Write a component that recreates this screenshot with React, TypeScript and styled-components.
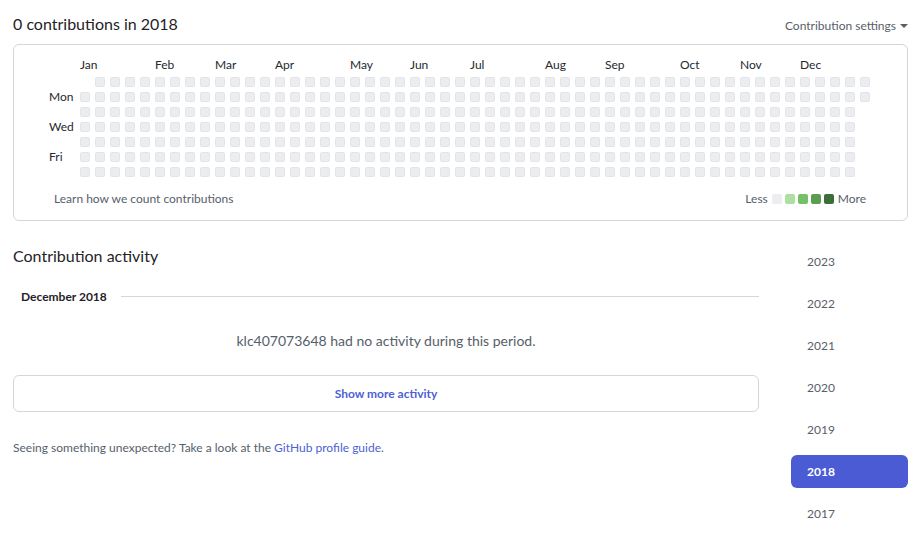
import React from 'react';
import styled, { createGlobalStyle } from 'styled-components';

const GlobalStyle = createGlobalStyle`
  body {
    margin: 0;
    background: #ffffff;
    color: #1f2328;
    font-family: Lato, 'Noto Sans', sans-serif;
  }
`;

const Page = styled.div`
  padding: 7px 16px 0 13px;
  width: 895px;
`;

const TopBar = styled.div`
  display: flex;
  align-items: center;
  justify-content: space-between;
  height: 32px;
  margin-bottom: 5px;
`;

const Heading = styled.h2`
  margin: 0;
  font-size: 16px;
  font-weight: 400;
  color: #1f2328;
`;

const Settings = styled.span`
  display: flex;
  align-items: center;
  gap: 4px;
  margin-top: 5px;
  font-size: 12px;
  color: #57606a;
`;

const Caret = styled.span`
  width: 0;
  height: 0;
  border-left: 4px solid transparent;
  border-right: 4px solid transparent;
  border-top: 4px solid #57606a;
`;

const Card = styled.div`
  border: 1px solid #d0d7de;
  border-radius: 6px;
  padding: 12px 0 10px 35px;
  height: 153px;
`;

const Calendar = styled.div`
  display: flex;
`;

const DayLabels = styled.div`
  display: grid;
  grid-template-rows: repeat(7, 10px);
  row-gap: 5px;
  width: 31px;
  margin-top: 20px;
  font-size: 12px;
  color: #24292f;
`;

const DayLabel = styled.span`
  line-height: 10px;
  height: 10px;
  white-space: nowrap;
`;

const Weeks = styled.div`
  display: flex;
  flex-direction: column;
  gap: 5px;
`;

const MonthRow = styled.div`
  display: grid;
  grid-template-columns: repeat(53, 10px);
  column-gap: 5px;
  height: 15px;
  font-size: 12px;
  color: #24292f;
  line-height: 15px;
`;

const Month = styled.span<{ $col: number }>`
  grid-column: ${(p) => p.$col + 1} / span 4;
  white-space: nowrap;
`;

const Cells = styled.div`
  display: grid;
  grid-template-rows: repeat(7, 10px);
  grid-auto-columns: 10px;
  grid-auto-flow: column;
  gap: 5px;
`;

const Cell = styled.span<{ $empty?: boolean }>`
  width: 10px;
  height: 10px;
  border-radius: 2px;
  background: ${(p) => (p.$empty ? 'transparent' : '#ebedf0')};
  outline: ${(p) => (p.$empty ? 'none' : '1px solid rgba(27, 31, 35, 0.04)')};
  outline-offset: -1px;
`;

const CardFooter = styled.div`
  display: flex;
  justify-content: space-between;
  align-items: center;
  margin-top: 14px;
  padding: 0 40px 0 5px;
  font-size: 12px;
  color: #57606a;
`;

const Legend = styled.div`
  display: flex;
  align-items: center;
  gap: 3px;
`;

const LegendBox = styled.span<{ $color: string }>`
  width: 10px;
  height: 10px;
  border-radius: 2px;
  background: ${(p) => p.$color};
`;

const LegendText = styled.span`
  margin: 0 1px;
`;

const Lower = styled.div`
  display: flex;
  justify-content: space-between;
  margin-top: 23px;
`;

const Activity = styled.div`
  width: 746px;
`;

const ActivityTitle = styled.h2`
  margin: 0;
  font-size: 16px;
  font-weight: 400;
  line-height: 24px;
`;

const PeriodRow = styled.div`
  display: flex;
  align-items: center;
  gap: 14px;
  margin: 18px 0 0 8px;
  height: 20px;
`;

const PeriodLabel = styled.span`
  font-size: 12px;
  font-weight: 700;
  color: #1f2328;
`;

const Rule = styled.span`
  flex: 1;
  height: 1px;
  background: #d0d7de;
`;

const Empty = styled.p`
  margin: 26px 0 0;
  text-align: center;
  font-size: 14px;
  color: #57606a;
`;

const MoreButton = styled.button`
  display: block;
  width: 100%;
  height: 37px;
  margin-top: 26px;
  border: 1px solid #d0d7de;
  border-radius: 6px;
  background: #ffffff;
  font-family: inherit;
  font-size: 12px;
  font-weight: 700;
  color: #4c5fd5;
`;

const Hint = styled.p`
  margin: 28px 0 0;
  font-size: 12px;
  color: #57606a;
`;

const Link = styled.a`
  color: #4c5fd5;
  text-decoration: none;
`;

const Years = styled.ul`
  list-style: none;
  margin: 1px 0 0;
  padding: 0;
  width: 117px;
  display: flex;
  flex-direction: column;
  gap: 9px;
`;

const Year = styled.li<{ $active?: boolean }>`
  height: 33px;
  display: flex;
  align-items: center;
  padding-left: 16px;
  border-radius: 6px;
  font-size: 12px;
  font-weight: ${(p) => (p.$active ? 700 : 400)};
  color: ${(p) => (p.$active ? '#ffffff' : '#57606a')};
  background: ${(p) => (p.$active ? '#4a5bd4' : 'transparent')};
`;

const MONTHS = ['Jan', 'Feb', 'Mar', 'Apr', 'May', 'Jun', 'Jul', 'Aug', 'Sep', 'Oct', 'Nov', 'Dec'];
const DAYS = ['', 'Mon', '', 'Wed', '', 'Fri', ''];
const LEVELS = ['#ebedf0', '#acdfa2', '#74c067', '#5b9e51', '#3e6e37'];
const YEARS = [2023, 2022, 2021, 2020, 2019, 2018, 2017];

// the first week of 2018 starts on Sunday Dec 31 2017
const start = new Date(2017, 11, 31);
const dayIndex = (d: Date) => Math.round((d.getTime() - start.getTime()) / 86400000);

const monthCols = MONTHS.map((name, m) => {
  if (m === 0) return { name, col: 0 };
  const d = new Date(2018, m, 1);
  while (d.getDay() !== 0) d.setDate(d.getDate() + 1);
  return { name, col: Math.floor(dayIndex(d) / 7) };
});

const days: { empty: boolean }[] = [];
for (let i = 0; i < 7 * 52 + 2; i++) {
  days.push({ empty: i === 0 });
}

const App = () => (
  <Page>
    <GlobalStyle />
    <TopBar>
      <Heading>0 contributions in 2018</Heading>
      <Settings>
        Contribution settings <Caret />
      </Settings>
    </TopBar>
    <Card>
      <Calendar>
        <DayLabels>
          {DAYS.map((d, i) => (
            <DayLabel key={i}>{d}</DayLabel>
          ))}
        </DayLabels>
        <Weeks>
          <MonthRow>
            {monthCols.map((m) => (
              <Month key={m.name} $col={m.col}>
                {m.name}
              </Month>
            ))}
          </MonthRow>
          <Cells>
            {days.map((d, i) => (
              <Cell key={i} $empty={d.empty} />
            ))}
          </Cells>
        </Weeks>
      </Calendar>
      <CardFooter>
        <span>Learn how we count contributions</span>
        <Legend>
          <LegendText>Less</LegendText>
          {LEVELS.map((c) => (
            <LegendBox key={c} $color={c} />
          ))}
          <LegendText>More</LegendText>
        </Legend>
      </CardFooter>
    </Card>
    <Lower>
      <Activity>
        <ActivityTitle>Contribution activity</ActivityTitle>
        <PeriodRow>
          <PeriodLabel>December 2018</PeriodLabel>
          <Rule />
        </PeriodRow>
        <Empty>klc407073648 had no activity during this period.</Empty>
        <MoreButton>Show more activity</MoreButton>
        <Hint>
          Seeing something unexpected? Take a look at the <Link href="#">GitHub profile guide</Link>.
        </Hint>
      </Activity>
      <Years>
        {YEARS.map((y) => (
          <Year key={y} $active={y === 2018}>
            {y}
          </Year>
        ))}
      </Years>
    </Lower>
  </Page>
);

export default App;
